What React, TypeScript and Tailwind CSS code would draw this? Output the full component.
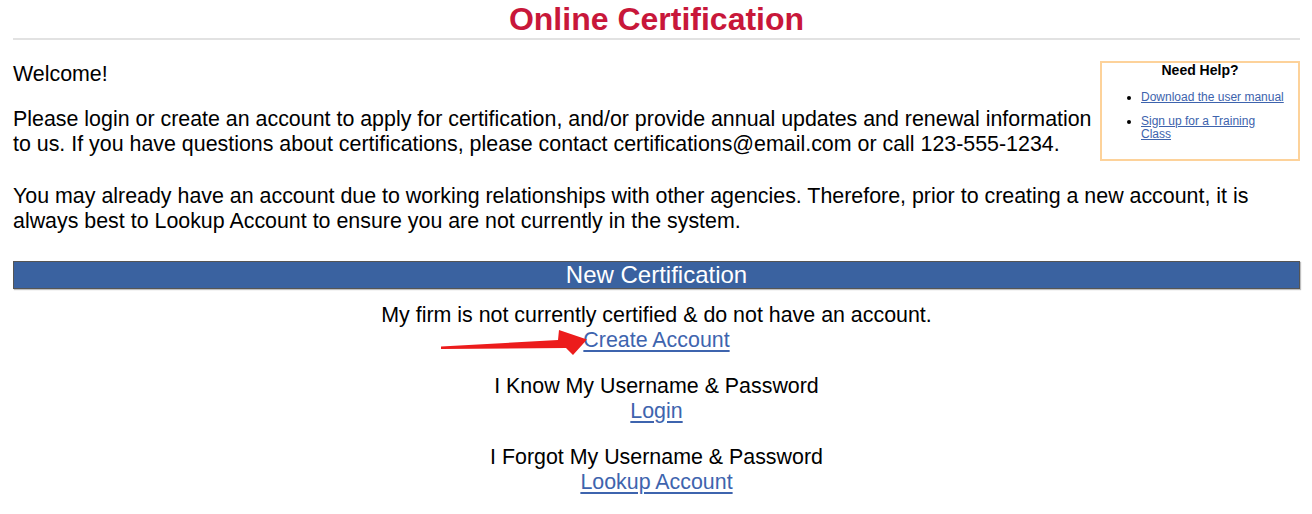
import React from "react"

function HelpBox() {
  return (
    <div className="float-right ml-[6px] mt-[1px] w-[200px] border-2 border-[#fdd29a] pb-[17px]">
      <div className="text-center text-[14px] font-bold leading-[14px] text-black">Need Help?</div>
      <ul className="mt-[14px] list-disc pl-[39px] pr-[10px] text-[12px] leading-[13.5px]">
        <li>
          <a href="#" className="text-[#3d63ad] underline">
            Download the user manual
          </a>
        </li>
        <li className="mt-[10px]">
          <a href="#" className="text-[#3d63ad] underline">
            Sign up for a Training Class
          </a>
        </li>
      </ul>
    </div>
  )
}

function Arrow() {
  return (
    <svg
      className="pointer-events-none absolute left-[-144px] top-[1px]"
      width="150"
      height="28"
      viewBox="0 0 150 28"
    >
      <polygon
        points="2,17.5 119,11 120,1 148,10.5 134,26 127,19 2,20"
        fill="#ec1c1c"
      />
    </svg>
  )
}

function Option({
  label,
  link,
  arrow,
}: {
  label: string
  link: string
  arrow?: boolean
}) {
  return (
    <div className="text-center">
      <div>{label}</div>
      <div>
        <a href="#" className="relative inline-block text-[#3e64ae] underline underline-offset-[3px]">
          {arrow && <Arrow />}
          {link}
        </a>
      </div>
    </div>
  )
}

export default function App() {
  return (
    <div
      className="min-h-[514px] bg-white pl-[13px] pr-[12px] text-black"
      style={{ fontFamily: '"Liberation Sans", Arial, sans-serif' }}
    >
      <h1 className="pt-[1px] text-center text-[32px] font-bold leading-[36px] text-[#c8173a]">
        Online Certification
      </h1>
      <div className="mt-[1px] h-[2px] bg-[#e2e2e2]" />

      <div className="mt-[20px] text-[21.4px] leading-[25px]">
        <HelpBox />
        <p className="pt-[2px]">Welcome!</p>
        <p className="mt-[20px]">
          Please login or create an account to apply for certification, and/or provide annual updates and renewal
          information to us. If you have questions about certifications, please contact certifications@email.com or
          call 123-555-1234.
        </p>
        <p className="mt-[27px]">
          You may already have an account due to working relationships with other agencies. Therefore, prior to
          creating a new account, it is always best to Lookup Account to ensure you are not currently in the system.
        </p>
      </div>

      <div className="mt-[27px] flex h-[28px] items-center justify-center border border-[#555] bg-[#3a62a0] text-[24px] leading-none text-white shadow-[1px_1px_1px_rgba(0,0,0,0.25)]">
        New Certification
      </div>

      <div className="mt-[14px] flex flex-col gap-[21px] text-[21.4px] leading-[25px]">
        <Option label="My firm is not currently certified & do not have an account." link="Create Account" arrow />
        <Option label="I Know My Username & Password" link="Login" />
        <Option label="I Forgot My Username & Password" link="Lookup Account" />
      </div>
    </div>
  )
}
